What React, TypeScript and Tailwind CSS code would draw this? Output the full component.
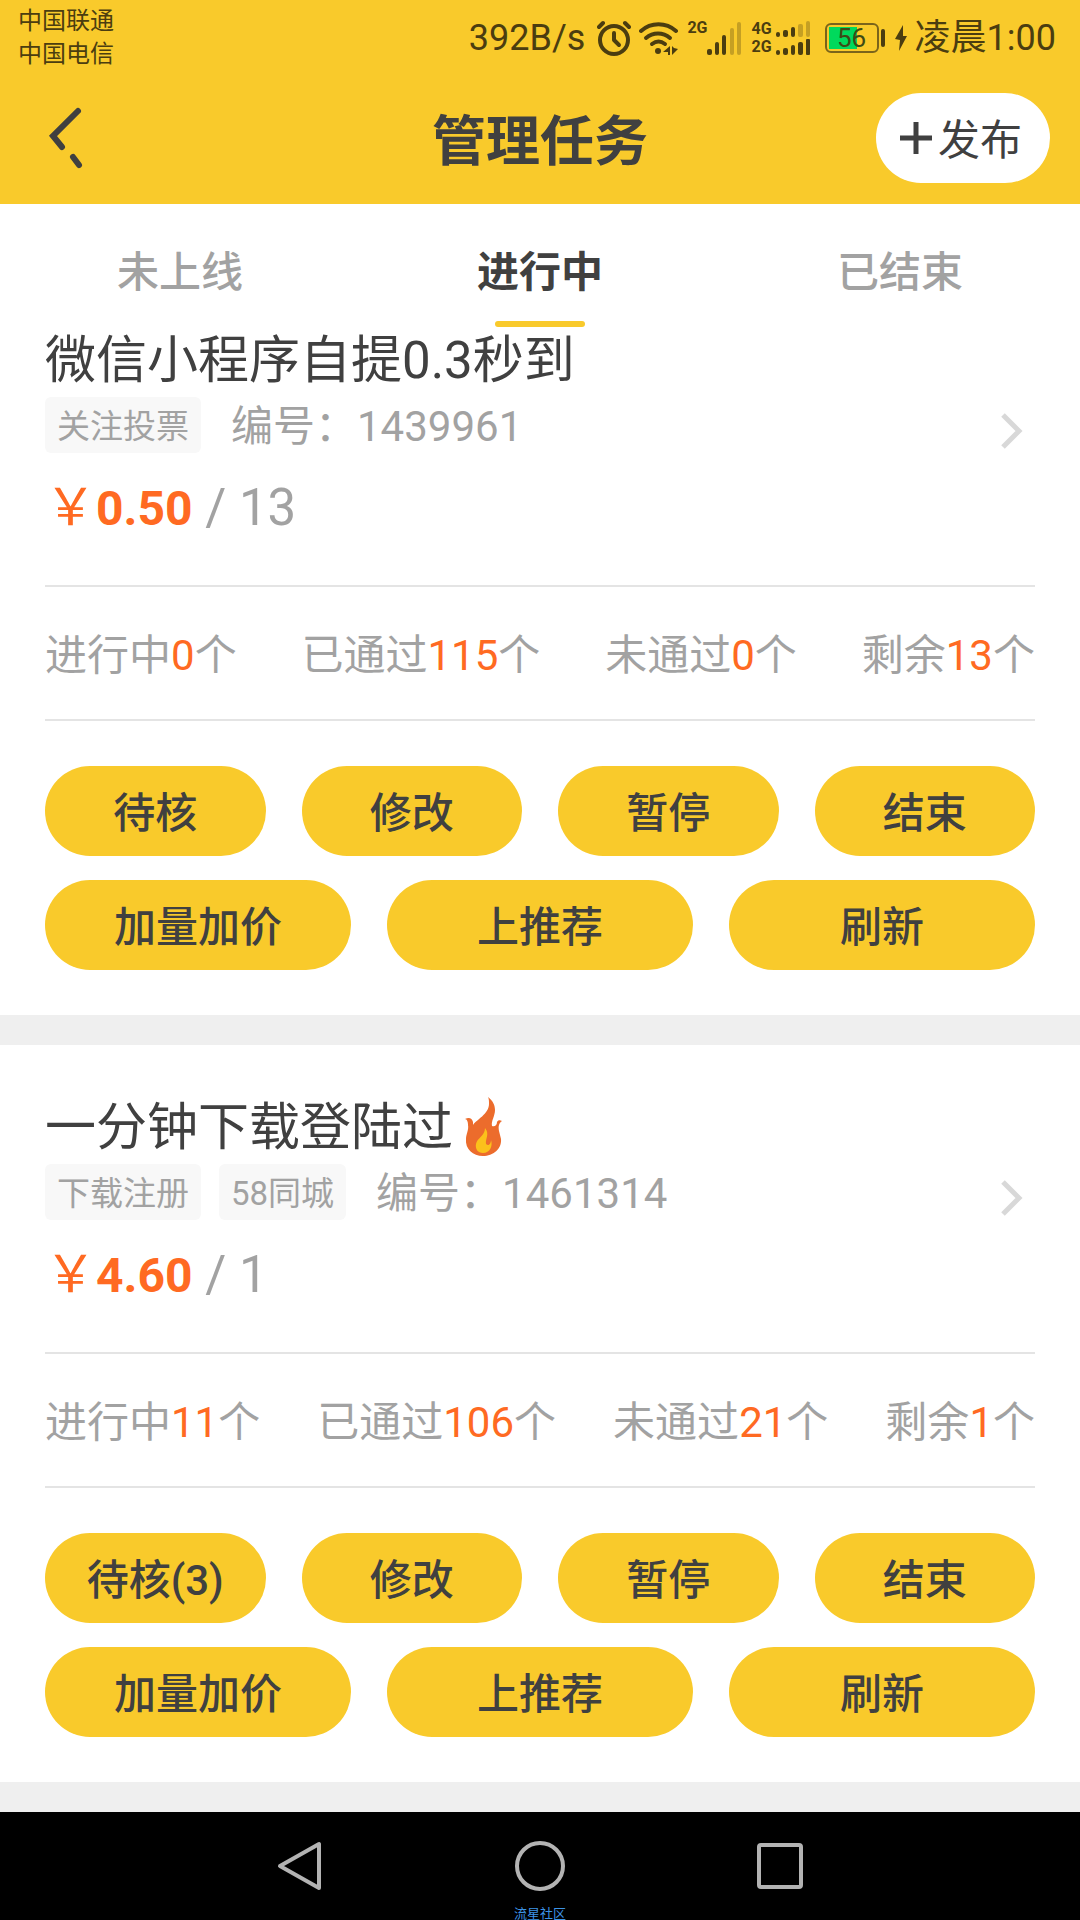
// App.tsx

import React, { useState } from "react";

type Task = {
  id: string;
  title: string;
  hot: boolean;
  tags: string[];
  price: string;
  left: number;
  running: number;
  passed: number;
  failed: number;
  pending: number;
};

const tabs = ["未上线", "进行中", "已结束"];

const tasks: Task[] = [
  {
    id: "1439961",
    title: "微信小程序自提0.3秒到",
    hot: false,
    tags: ["关注投票"],
    price: "0.50",
    left: 13,
    running: 0,
    passed: 115,
    failed: 0,
    pending: 0,
  },
  {
    id: "1461314",
    title: "一分钟下载登陆过",
    hot: true,
    tags: ["下载注册", "58同城"],
    price: "4.60",
    left: 1,
    running: 11,
    passed: 106,
    failed: 21,
    pending: 3,
  },
];

const AlarmIcon = () => (
  <svg width="34" height="36" viewBox="0 0 34 36" fill="none" stroke="currentColor" strokeWidth="4" strokeLinecap="round">
    <circle cx="17" cy="20" r="14" />
    <path d="M17 13v7l5 5" strokeLinejoin="round" />
    <path d="M2 7l4-4M32 7l-4-4" />
  </svg>
);

const WifiIcon = () => (
  <svg width="40" height="36" viewBox="0 0 40 36" fill="none" stroke="currentColor" strokeWidth="4" strokeLinecap="round">
    <path d="M2 11C12 2 27 2 37 11" />
    <path d="M7 18c7-6 17-6 24 0" />
    <path d="M13 24c4-3 9-3 13 0" />
    <circle cx="19" cy="31" r="3" fill="currentColor" stroke="none" />
    <path d="M31 26v9h-2v-3h-5zM33 26v9l2-2 4-4-4-1z" fill="currentColor" stroke="none" />
  </svg>
);

const SignalIcon = () => (
  <svg width="36" height="36" viewBox="0 0 36 36" fill="currentColor">
    <rect x="0" y="29" width="5" height="6" rx="2" />
    <rect x="8" y="22" width="4" height="13" rx="2" />
    <rect x="15" y="15" width="4" height="20" rx="2" />
    <rect x="23" y="8" width="4" height="27" rx="2" opacity="0.3" />
    <rect x="30" y="2" width="4" height="33" rx="2" opacity="0.3" />
  </svg>
);

const DualSignalIcon = () => (
  <svg width="35" height="36" viewBox="0 0 35 36" fill="currentColor">
    <rect x="0" y="12" width="4" height="5" rx="2" />
    <rect x="7" y="10" width="5" height="7" rx="2" />
    <rect x="15" y="7" width="4" height="10" rx="2" />
    <rect x="22" y="4" width="5" height="13" rx="2" opacity="0.3" />
    <rect x="30" y="1" width="4" height="16" rx="2" opacity="0.3" />
    <rect x="0" y="30" width="4" height="5" rx="2" />
    <rect x="7" y="28" width="5" height="7" rx="2" />
    <rect x="15" y="25" width="4" height="10" rx="2" />
    <rect x="22" y="22" width="5" height="13" rx="2" />
    <rect x="30" y="19" width="4" height="16" rx="1" />
  </svg>
);

const BoltIcon = () => (
  <svg width="12" height="26" viewBox="0 0 12 26" fill="currentColor">
    <path d="M8 0L0 14l5 1-1 11 8-15H8z" />
  </svg>
);

const FlameIcon = () => (
  <svg width="37" height="59" viewBox="0 0 37 59" className="ml-3">
    <path
      d="M23 0c5 4 7 8 7 13 0 6-4 11-3 16 3 1 5-1 5-4 1-2 3-2 5-1-3 2-4 5-3 10l2 8c1 10-8 17-18 17S0 52 1 42c0-5 3-9 2-14 0-3-1-6-3-6 4-2 7-1 8 3v3c3-5 16-11 16-21 0-3 0-5-1-7z"
      fill="#ec6c2c"
    />
    <path
      d="M20 31c5 6 0 11 1 16 3 3 5-1 5-4 2 6-1 13-8 13-5 0-8-4-7-9 1-6 9-8 9-16z"
      fill="#fbc11b"
    />
  </svg>
);

const StatusBar = () => (
  <div className="flex h-18 items-center justify-between pl-4.5 pr-6 pt-1 text-[#4b3d10]">
    <div className="text-2xl/[33px]">
      <p>中国联通</p>
      <p>中国电信</p>
    </div>
    <div className="flex items-center text-4xl">
      <span className="mr-3">392B/s</span>
      <AlarmIcon />
      <span className="w-2" />
      <WifiIcon />
      <span className="ml-2 self-start text-base/5 font-bold">2G</span>
      <SignalIcon />
      <span className="ml-2 mr-1 text-base/[18px] font-bold">
        4G
        <br />
        2G
      </span>
      <DualSignalIcon />
      <span className="ml-3.5 flex h-7.5 w-[54px] rounded-md border-2 border-[#7a641b] p-0.5">
        <span className="flex-1 bg-linear-to-r from-[#00d95c] from-60% to-transparent to-60% text-center text-[26px]/[22px] text-[#3d4a15]">
          56
        </span>
      </span>
      <span className="ml-0.5 mr-2.5 h-4.5 w-1 rounded-full bg-[#4b3d10]" />
      <BoltIcon />
      <span className="ml-2">凌晨1:00</span>
    </div>
  </div>
);

const Header = () => (
  <header className="bg-[#f9ca2b]">
    <StatusBar />
    <div className="grid h-33 grid-cols-[1fr_auto_1fr] items-center text-[#404040]">
      <button type="button" aria-label="返回" className="justify-self-start pl-11.5">
        <svg width="40" height="64" viewBox="0 0 40 64" fill="none" stroke="currentColor" strokeWidth="6" strokeLinecap="round">
          <path d="M32 5L7 30l9 11" />
          <path d="M27 51l6 8" />
        </svg>
      </button>
      <h1 className="pt-2 text-[54px] font-bold">管理任务</h1>
      <button
        type="button"
        className="mr-7.5 flex h-22.5 items-center gap-1.5 justify-self-end rounded-full bg-white pl-6 pr-7 text-[42px]"
      >
        <svg width="32" height="32" viewBox="0 0 32 32" stroke="currentColor" strokeWidth="5">
          <path d="M16 0v32M0 16h32" />
        </svg>
        <span className="pt-1">发布</span>
      </button>
    </div>
  </header>
);

type StatProps = {
  label: string;
  value: number;
};

const Stat = ({ label, value }: StatProps) => (
  <p>
    {label}
    <span className="text-[#ff6a22]">{value}</span>个
  </p>
);

const ActionButton = ({ children }: { children: React.ReactNode }) => (
  <button type="button" className="h-22.5 rounded-full bg-[#f9ca2b] pt-1 text-[42px] font-medium text-[#404040]">
    {children}
  </button>
);

const TaskCard = ({ task }: { task: Task }) => (
  <article className="bg-white px-11.25 py-11.25 text-[#a2a2a2] first:pt-0">
    <div className="flex items-center justify-between pb-[43px]">
      <div>
        <h2 className="flex h-18 items-center text-[51px] text-[#404040]">
          <span className="pt-1">{task.title}</span>
          {task.hot && <FlameIcon />}
        </h2>
        <div className="mt-0.5 flex items-center">
          {task.tags.map((tag) => (
            <span key={tag} className="mr-4.5 h-14 rounded-md bg-[#f8f8f8] px-3 text-[33px]/[60px]">
              {tag}
            </span>
          ))}
          <span className="ml-3 h-14 text-[42px]/[60px]">编号：{task.id}</span>
        </div>
        <p className="mt-5.5 text-[51px]/[66px]">
          <span className="text-[#ff6a22]">￥</span>
          <b className="text-5xl/[66px] text-[#ff6a22]">{task.price}</b> / {task.left}
        </p>
      </div>
      <svg width="22" height="36" viewBox="0 0 22 36" fill="none" stroke="#d8d8d8" strokeWidth="5" className="mb-1 mr-3">
        <path d="M2 2l16 16L2 34" />
      </svg>
    </div>
    <div className="flex h-34 items-center justify-between border-y-2 border-[#e4e4e4] pt-1 text-[42px]">
      <Stat label="进行中" value={task.running} />
      <Stat label="已通过" value={task.passed} />
      <Stat label="未通过" value={task.failed} />
      <Stat label="剩余" value={task.left} />
    </div>
    <div className="mt-11.25 grid grid-cols-4 gap-9">
      <ActionButton>待核{task.pending > 0 && `(${task.pending})`}</ActionButton>
      <ActionButton>修改</ActionButton>
      <ActionButton>暂停</ActionButton>
      <ActionButton>结束</ActionButton>
    </div>
    <div className="mt-6 grid grid-cols-3 gap-9">
      <ActionButton>加量加价</ActionButton>
      <ActionButton>上推荐</ActionButton>
      <ActionButton>刷新</ActionButton>
    </div>
  </article>
);

const SystemNav = () => (
  <nav className="relative flex h-27 items-center justify-center gap-[190px] bg-black text-[#b3b3b3]">
    <button type="button" aria-label="后退">
      <svg width="50" height="50" viewBox="0 0 50 50" fill="none" stroke="currentColor" strokeWidth="4" strokeLinejoin="round">
        <path d="M44 3v44L5 25z" />
      </svg>
    </button>
    <button type="button" aria-label="主屏幕">
      <svg width="50" height="50" viewBox="0 0 50 50" fill="none" stroke="currentColor" strokeWidth="4">
        <circle cx="25" cy="25" r="23" />
      </svg>
    </button>
    <button type="button" aria-label="最近任务">
      <svg width="50" height="50" viewBox="0 0 50 50" fill="none" stroke="currentColor" strokeWidth="4">
        <rect x="4" y="4" width="42" height="42" rx="2" />
      </svg>
    </button>
    <span className="absolute inset-x-0 bottom-0 text-center text-[13px]/[12px] text-[#3d94e6]">流星社区</span>
  </nav>
);

const App = () => {
  const [activeTab, setActiveTab] = useState<string>("进行中");

  return (
    <div className="flex min-h-screen flex-col bg-[#efefef] font-['Roboto','Noto_Sans_CJK_SC',sans-serif]">
      <Header />
      <div role="tablist" className="grid h-[119px] grid-cols-3 bg-white text-[42px]">
        {tabs.map((tab) => (
          <button
            key={tab}
            type="button"
            role="tab"
            aria-selected={tab === activeTab}
            onClick={() => setActiveTab(tab)}
            className={
              tab === activeTab
                ? "relative pt-4.5 font-bold text-[#404040]"
                : "relative pt-4.5 font-medium text-[#a2a2a2]"
            }
          >
            {tab}
            {tab === activeTab && (
              <span className="absolute inset-x-0 -bottom-1 mx-auto h-1.5 w-22.5 rounded-full bg-[#f9ca2b]" />
            )}
          </button>
        ))}
      </div>
      <main className="flex flex-1 flex-col gap-7.5">
        {tasks.map((task) => (
          <TaskCard key={task.id} task={task} />
        ))}
      </main>
      <div className="h-7.5" />
      <SystemNav />
    </div>
  );
};

export default App;
